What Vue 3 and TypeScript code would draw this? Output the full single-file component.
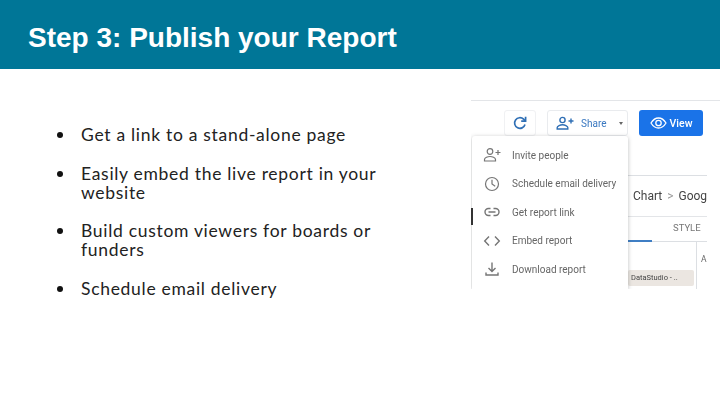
<script setup lang="ts">
const items: string[] = [
  'Get a link to a stand-alone page',
  'Easily embed the live report in your website',
  'Build custom viewers for boards or funders',
  'Schedule email delivery',
]
const menu: { label: string; icon: string }[] = [
  { label: 'Invite people', icon: 'invite' },
  { label: 'Schedule email delivery', icon: 'clock' },
  { label: 'Get report link', icon: 'link' },
  { label: 'Embed report', icon: 'embed' },
  { label: 'Download report', icon: 'download' },
]
</script>

<template>
  <div class="slide">
    <header class="head"><h1>Step 3: Publish your Report</h1></header>
    <main class="body">
      <ul class="list">
        <li v-for="t in items" :key="t"><span class="dot"></span><span class="txt">{{ t }}</span></li>
      </ul>
      <section class="shot">
        <div class="toolbar">
          <div class="tool refresh">
            <svg width="16" height="16" viewBox="0 0 16 16" fill="none" stroke="#2f6fb5" stroke-width="1.7"><path d="M13 9.5A5.3 5.3 0 1 1 11.6 4.2L13.2 5.8"/><path d="M13.6 1.8V6.2H9.2" fill="none"/></svg>
          </div>
          <div class="tool share">
            <svg width="18" height="14" viewBox="0 0 18 14" fill="none" stroke="#2f6fb5" stroke-width="1.4"><circle cx="6.5" cy="4" r="2.6"/><path d="M1.2 13v-1.4c0-1.8 3.2-2.8 5.3-2.8s5.3 1 5.3 2.8V13z"/><path d="M12.5 5h5M15 2.5v5"/></svg>
            <span>Share</span>
            <i class="caret"></i>
          </div>
          <div class="view">
            <svg width="17" height="12" viewBox="0 0 17 12" fill="none" stroke="#fff" stroke-width="1.3"><path d="M1 6c2-3.300 4.500-5 7.500-5s5.500 1.700 7.500 5c-2 3.300-4.500 5-7.500 5S3 9.300 1 6z"/><circle cx="8.500" cy="6" r="2.700"/></svg>
            <span>View</span>
          </div>
        </div>
        <div class="under">
          <div class="crumb">Chart <span class="gt">&gt;</span> Goog</div>
          <div class="tabs"><span class="active"></span><span class="style">STYLE</span></div>
          <div class="panel">
            <div class="pcol">
              <div class="chip">DataStudio - ..</div>
            </div>
            <div class="pside">A</div>
          </div>
        </div>
        <span class="edge"></span>
        <div class="menu">
          <div v-for="m in menu" :key="m.label" class="row">
            <svg class="ic" width="18" height="16" viewBox="0 0 18 16" fill="none" stroke="#757575" stroke-width="1.200">
              <template v-if="m.icon === 'invite'"><circle cx="7" cy="4.500" r="2.800"/><path d="M1.500 14v-1.500c0-1.900 3.400-3 5.500-3s5.500 1.100 5.500 3V14z"/><path d="M12.500 5.500h5M15 3v5"/></template>
              <template v-else-if="m.icon === 'clock'"><circle cx="9" cy="8" r="6.500"/><path d="M9 3.800V8l3.200 2.200"/></template>
              <template v-else-if="m.icon === 'link'"><path d="M7.500 4.500H5.500a3.500 3.500 0 0 0 0 7h2M10.500 4.500h2a3.500 3.500 0 0 1 0 7h-2M5.500 8h7" stroke-width="1.400"/></template>
              <template v-else-if="m.icon === 'embed'"><path d="M6 3.500 1.700 8 6 12.500M12 3.500 16.300 8 12 12.500" stroke-width="1.400"/></template>
              <template v-else><path d="M9 1.500v8.500M5.500 7 9 10.500 12.500 7M3 11.500v2.500h12v-2.500" stroke-width="1.400"/></template>
            </svg>
            <span>{{ m.label }}</span>
          </div>
        </div>
      </section>
    </main>
  </div>
</template>

<style>
html, body { margin: 0; background: #fff; }
</style>

<style scoped>
.slide { width: 720px; height: 405px; overflow: hidden; background: #fff; display: flex; flex-direction: column; }
.head { height: 69px; background: #007697; display: flex; align-items: center; padding: 6px 0 0 28px; box-sizing: border-box; flex: none; }
h1 { margin: 0; color: #fff; font: 700 28px/1 "Liberation Sans", sans-serif; }
.body { display: flex; flex: 1; min-height: 0; justify-content: space-between; padding-top: 31px; }
.list { list-style: none; margin: 0; padding: 25px 0 0 57px; width: 320px; display: flex; flex-direction: column; gap: 19.300px; font: 400 17.500px/19.200px Lato, sans-serif; color: #222; letter-spacing: 0.700px; }
li { display: flex; align-items: flex-start; }
.dot { width: 6px; height: 6px; border-radius: 50%; background: #111; flex: none; margin: 7px 18px 0 0; }
.txt { display: block; }
.shot { position: relative; width: 249px; height: 189px; border-top: 1px solid #e3e5e8; box-sizing: border-box; overflow: hidden; background: #fff; font-family: Roboto, sans-serif; filter: blur(0.35px); }
.toolbar { display: flex; height: 35px; align-items: flex-end; padding-left: 33px; gap: 11px; }
.tool { height: 26px; border: 1px solid #e9ebee; border-radius: 3px; display: flex; align-items: center; box-sizing: border-box; }
.refresh { width: 32px; justify-content: center; border-color: #f0f1f3; }
.share { width: 81px; padding-left: 8px; gap: 7px; color: #3a78c0; font-size: 10px; }
.caret { width: 0; height: 0; border: 2.500px solid transparent; border-top: 3px solid #666; border-bottom: 0; margin-left: 6px; }
.view { width: 64px; height: 26px; background: #1a73e8; border-radius: 3px; display: flex; align-items: center; justify-content: center; gap: 3px; color: #fff; font-size: 10.500px; font-weight: 500; }
.under { margin-left: 157px; width: 79px; margin-top: 39px; border-top: 1px solid #dcdfe3; }
.crumb { height: 40px; line-height: 40px; font-size: 12px; color: #444; white-space: nowrap; overflow: hidden; padding-left: 5px; box-sizing: border-box; }
.gt { color: #999; margin: 0 2px; }
.tabs { height: 26px; border-top: 1px solid #e3e5e8; border-bottom: 1px solid #dcdfe3; position: relative; box-sizing: border-box; }
.active { position: absolute; left: 0; bottom: -1px; width: 24px; height: 2px; background: #3f7ec4; }
.style { position: absolute; left: 45px; top: 5px; font-size: 9.500px; color: #777; }
.panel { display: flex; height: 47px; }
.pcol { width: 69px; border-right: 1px solid #dcdfe3; padding-top: 28px; box-sizing: border-box; }
.chip { width: 66px; height: 16px; background: #ebe6e1; border-radius: 2px; font-size: 7.500px; line-height: 16px; color: #444; padding-left: 3px; box-sizing: border-box; white-space: nowrap; overflow: hidden; }
.pside { font-size: 8.500px; color: #666; padding: 12px 0 0 4px; }
.edge { position: absolute; left: 0; top: 107px; width: 1.500px; height: 17px; background: #333; z-index: 2; }
.menu { position: absolute; left: 1px; top: 35px; width: 156px; height: 153px; background: #fff; box-shadow: 0 1px 4px rgba(60, 64, 67, 0.35); border-radius: 3px 3px 0 0; padding-top: 5px; box-sizing: border-box; }
.row { height: 28.500px; display: flex; align-items: center; gap: 11px; padding-left: 11px; font-size: 10px; color: #666; white-space: nowrap; }
.ic { flex: none; }
</style>
